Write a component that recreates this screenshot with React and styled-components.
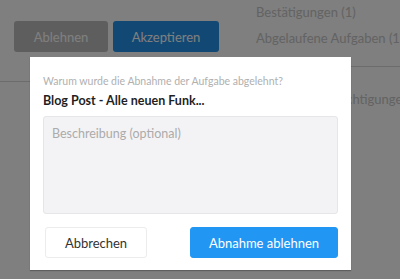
import styled, { createGlobalStyle } from "styled-components";

const Global = createGlobalStyle`
  html, body {
    margin: 0;
    padding: 0;
    background: #fff;
    font-family: Lato, "Open Sans", sans-serif;
    overflow: hidden;
  }
`;

const Page = styled.div`
  width: 400px;
  height: 279px;
  position: relative;
`;

const Header = styled.div`
  display: flex;
  justify-content: space-between;
  padding: 0 0 0 14px;
`;

const Actions = styled.div`
  display: flex;
  gap: 5px;
  padding-top: 21px;
`;

const BgButton = styled.button`
  height: 31px;
  width: ${(p) => p.$w}px;
  border: none;
  border-radius: 3px;
  background: ${(p) => p.$bg};
  color: #fff;
  font-family: inherit;
  font-size: 13px;
`;

const SideNav = styled.ul`
  list-style: none;
  margin: 0;
  padding: 3px 0 0 0;
  width: 144px;
  color: #c6c6c6;
  font-size: 13px;
`;

const NavItem = styled.li`
  height: 26px;
  line-height: 18px;
  white-space: nowrap;
`;

const Divider = styled.div`
  height: 1px;
  background: #d8d8d8;
  margin: ${(p) => p.$m};
`;

const NavLower = styled.div`
  padding-left: 296px;
  color: #c6c6c6;
  font-size: 13px;
  white-space: nowrap;
  margin-top: 9px;
`;

const Overlay = styled.div`
  position: absolute;
  inset: 0;
  background: rgba(0, 0, 0, 0.5);
  padding: 57px 0 0 30px;
`;

const Modal = styled.div`
  width: 321px;
  height: 213px;
  background: #fff;
  box-shadow: 0 1px 1px rgba(0, 0, 0, 0.25);
  padding: 17px 13px 0 13px;
  box-sizing: border-box;
`;

const Question = styled.div`
  font-size: 10.5px;
  color: #b0b0b0;
  line-height: 14px;
`;

const Title = styled.div`
  font-size: 12.5px;
  font-weight: 700;
  color: #1f1f1f;
  line-height: 16px;
  margin-top: 5px;
`;

const TextArea = styled.textarea`
  display: block;
  box-sizing: border-box;
  width: 295px;
  height: 98px;
  margin-top: 7px;
  background: #f3f3f5;
  border: 1px solid #e6e6e8;
  border-radius: 3px;
  resize: none;
  padding: 9px 8px;
  font-family: inherit;
  font-size: 12.5px;
  color: #333;
  outline: none;
  &::placeholder {
    color: #ababab;
  }
`;

const Footer = styled.div`
  display: flex;
  justify-content: space-between;
  margin-top: 13px;
  padding-left: 2px;
`;

const Btn = styled.button`
  height: 31px;
  width: ${(p) => p.$w}px;
  border-radius: 3px;
  font-family: inherit;
  font-size: 13px;
  border: 1px solid ${(p) => (p.$primary ? "#2196f3" : "#ececec")};
  background: ${(p) => (p.$primary ? "#2196f3" : "#fff")};
  color: ${(p) => (p.$primary ? "#fff" : "#333")};
`;

export default function App() {
  return (
    <Page>
      <Global />
      <Header>
        <Actions>
          <BgButton $w={94} $bg="#bdbdbd">Ablehnen</BgButton>
          <BgButton $w={106} $bg="#2590e8">Akzeptieren</BgButton>
        </Actions>
        <SideNav>
          <NavItem>Bestätigungen (1)</NavItem>
          <NavItem>Abgelaufene Aufgaben (1)</NavItem>
        </SideNav>
      </Header>
      <Divider $m="11px 0 0 256px" />
      <Divider $m="14px 370px 0 0" />
      <NavLower>Benachrichtigungen</NavLower>
      <Overlay>
        <Modal>
          <Question>Warum wurde die Abnahme der Aufgabe abgelehnt?</Question>
          <Title>Blog Post - Alle neuen Funk...</Title>
          <TextArea autoFocus placeholder="Beschreibung (optional)" />
          <Footer>
            <Btn $w={102}>Abbrechen</Btn>
            <Btn $w={148} $primary>Abnahme ablehnen</Btn>
          </Footer>
        </Modal>
      </Overlay>
    </Page>
  );
}
